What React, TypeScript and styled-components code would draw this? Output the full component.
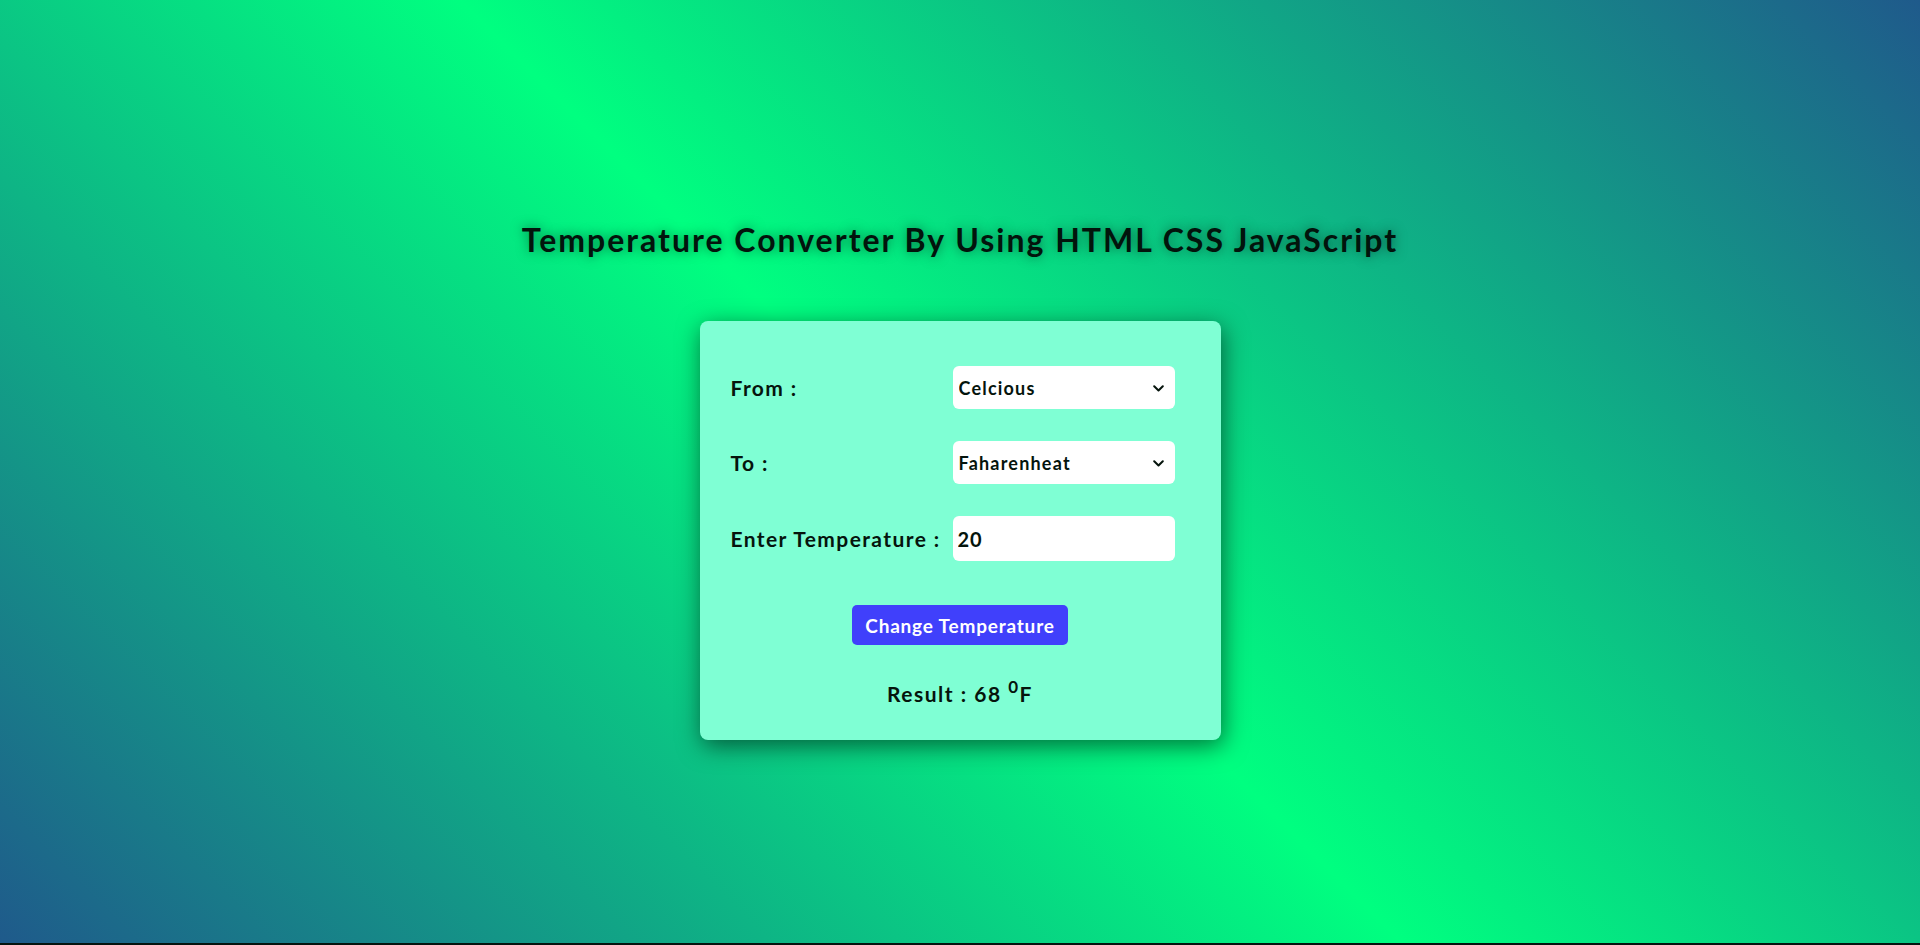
import React, { useState } from "react";
import styled, { createGlobalStyle } from "styled-components";

const GlobalStyle = createGlobalStyle`
  html { background: #05140f; }
  body { margin: 0; font-family: "Lato", "Open Sans", sans-serif; }
  * { box-sizing: border-box; }
`;

const Page = styled.div`
  height: 943px;
  background: linear-gradient(45deg, #1f5a8b 0%, #00ff80 49%, #1f5a8b 100%);
  display: flex;
  flex-direction: column;
  align-items: center;
  padding-top: 222px;
`;

const Title = styled.h1`
  margin: 0 0 63px;
  font-size: 32px;
  line-height: 36px;
  font-weight: 700;
  letter-spacing: 2px;
  color: #02140c;
  text-shadow: 0 0 12px rgba(0, 0, 0, 0.5);
`;

const Card = styled.div`
  width: 521px;
  background: #7fffd4;
  border-radius: 8px;
  box-shadow: 2px 6px 24px rgba(0, 0, 0, 0.55);
  padding: 45px 0 34px;
  display: flex;
  flex-direction: column;
`;

const FieldGrid = styled.div`
  display: grid;
  grid-template-columns: 222px 222px;
  row-gap: 32px;
  align-items: center;
  padding: 0 46px 0 31px;
`;

const Label = styled.label`
  font-size: 21px;
  font-weight: 700;
  letter-spacing: 1.4px;
  color: #05140c;
  white-space: nowrap;
`;

const SelectWrap = styled.div`
  position: relative;
  width: 222px;
  height: 43px;
`;

const Select = styled.select`
  appearance: none;
  -webkit-appearance: none;
  width: 100%;
  height: 100%;
  border: none;
  border-radius: 6px;
  background: #ffffff;
  font-family: "Lato", sans-serif;
  font-size: 18px;
  font-weight: 700;
  letter-spacing: 1.2px;
  color: #05140c;
  padding: 0 28px 0 6px;
  outline: none;
`;

const Chevron = styled.svg`
  position: absolute;
  right: 11px;
  top: 50%;
  width: 11px;
  height: 7px;
  margin-top: -3px;
  pointer-events: none;
`;

const Input = styled.input`
  width: 222px;
  height: 45px;
  border: none;
  border-radius: 6px;
  background: #ffffff;
  font-family: "Lato", sans-serif;
  font-size: 20px;
  font-weight: 700;
  letter-spacing: 1px;
  color: #05140c;
  padding: 0 5px;
  outline: none;
`;

const ButtonRow = styled.div`
  display: flex;
  justify-content: center;
  margin-top: 44px;
`;

const Button = styled.button`
  height: 40px;
  padding: 0 13px;
  border: none;
  border-radius: 5px;
  background: #4040fb;
  color: #ffffff;
  font-family: "Lato", sans-serif;
  font-size: 19px;
  font-weight: 700;
  letter-spacing: 0.8px;
  cursor: pointer;
`;

const Result = styled.div`
  margin-top: 31px;
  text-align: center;
  font-size: 21px;
  line-height: 24px;
  font-weight: 700;
  letter-spacing: 1.5px;
  color: #05140c;

  sup {
    font-size: 17px;
    position: relative;
    top: -1px;
  }
`;

const options = [
  { value: "c", label: "Celcious" },
  { value: "f", label: "Faharenheat" },
  { value: "k", label: "Kelvin" },
];

function UnitSelect({ value, onChange }: { value: string; onChange: (v: string) => void }) {
  return (
    <SelectWrap>
      <Select value={value} onChange={(e) => onChange(e.target.value)}>
        {options.map((o) => (
          <option key={o.value} value={o.value}>
            {o.label}
          </option>
        ))}
      </Select>
      <Chevron viewBox="0 0 11 7">
        <path d="M1.2 1.2 L5.5 5.5 L9.8 1.2" fill="none" stroke="#05140c" strokeWidth="2" strokeLinecap="round" strokeLinejoin="round" />
      </Chevron>
    </SelectWrap>
  );
}

export default function App() {
  const [from, setFrom] = useState("c");
  const [to, setTo] = useState("f");
  const [val, setVal] = useState("20");
  return (
    <>
      <GlobalStyle />
      <Page>
        <Title>Temperature Converter By Using HTML CSS JavaScript</Title>
        <Card>
          <FieldGrid>
            <Label>From :</Label>
            <UnitSelect value={from} onChange={setFrom} />
            <Label>To :</Label>
            <UnitSelect value={to} onChange={setTo} />
            <Label>Enter Temperature :</Label>
            <Input value={val} onChange={(e) => setVal(e.target.value)} />
          </FieldGrid>
          <ButtonRow>
            <Button>Change Temperature</Button>
          </ButtonRow>
          <Result>
            Result : 68 <sup>0</sup>F
          </Result>
        </Card>
      </Page>
    </>
  );
}
